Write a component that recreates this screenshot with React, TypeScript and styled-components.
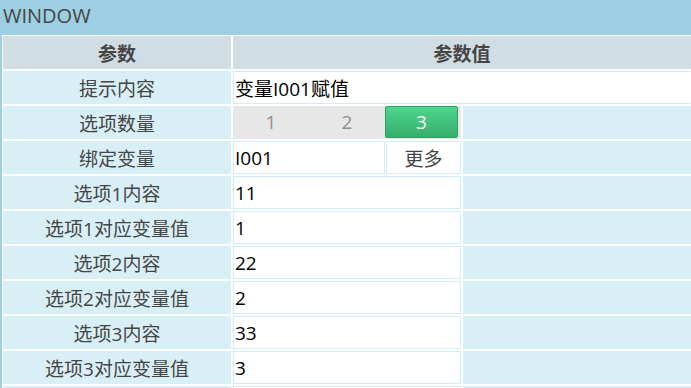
import React, { useState } from 'react';
import styled, { createGlobalStyle } from 'styled-components';

const GlobalStyle = createGlobalStyle`
  html, body {
    margin: 0;
    padding: 0;
    background: #9dcfe2;
    overflow: hidden;
    font-family: 'Open Sans', 'Noto Sans CJK SC', sans-serif;
  }
`;

type Row = { label: string; value: string };

const optionRows: Row[] = [
  { label: '选项1内容', value: '11' },
  { label: '选项1对应变量值', value: '1' },
  { label: '选项2内容', value: '22' },
  { label: '选项2对应变量值', value: '2' },
  { label: '选项3内容', value: '33' },
  { label: '选项3对应变量值', value: '3' },
  { label: '', value: '' },
];

const App: React.FC = () => {
  const [count, setCount] = useState(3);

  return (
    <Window>
      <GlobalStyle />
      <TitleBar>WINDOW</TitleBar>

      <Table>
        <HeadCell>参数</HeadCell>
        <HeadCell $span={2}>参数值</HeadCell>

        <LabelCell>提示内容</LabelCell>
        <ValueBox $span={2} $edge>变量I001赋值</ValueBox>

        <LabelCell>选项数量</LabelCell>
        <Segments>
          {[1, 2, 3].map(n => (
            <SegmentButton key={n} $active={n === count} onClick={() => setCount(n)}>
              {n}
            </SegmentButton>
          ))}
        </Segments>
        <Filler />

        <LabelCell>绑定变量</LabelCell>
        <BindRow>
          <ValueBox>I001</ValueBox>
          <MoreButton>更多</MoreButton>
        </BindRow>
        <Filler />

        {optionRows.map((row, i) => (
          <React.Fragment key={i}>
            <LabelCell>{row.label}</LabelCell>
            <ValueBox>{row.value}</ValueBox>
            <Filler />
          </React.Fragment>
        ))}
      </Table>
    </Window>
  );
};

const Window = styled.div`
  width: 691px;
  height: 388px;
  overflow: hidden;
  background: #9dcfe2;
`;

const TitleBar = styled.div`
  height: 35px;
  padding-left: 3px;
  display: flex;
  align-items: center;
  font-size: 20px;
  color: #454545;
  box-sizing: border-box;
  padding-bottom: 4px;
`;

const Table = styled.div`
  margin-left: 2px;
  padding: 1px 0 1px 1px;
  background: #ffffff;
  display: grid;
  grid-template-columns: 228px 228px 1fr;
  grid-auto-rows: 33px;
  gap: 2px;
`;

const HeadCell = styled.div<{ $span?: number }>`
  grid-column: span ${p => p.$span || 1};
  background: #d0dde2;
  display: flex;
  align-items: center;
  justify-content: center;
  font-size: 19px;
  font-weight: bold;
  color: #454545;
`;

const LabelCell = styled.div`
  background: #d8eff6;
  display: flex;
  align-items: center;
  justify-content: center;
  font-size: 19px;
  color: #454545;
`;

const ValueBox = styled.div<{ $span?: number; $edge?: boolean }>`
  grid-column: span ${p => p.$span || 1};
  background: #ffffff;
  border: 1px solid #d3ecf4;
  border-right-color: ${p => (p.$edge ? '#ffffff' : '#d3ecf4')};
  box-sizing: border-box;
  display: flex;
  align-items: center;
  padding-left: 1px;
  font-size: 19px;
  color: #000;
  min-width: 0;
`;

const Filler = styled.div`
  background: #d8eff6;
`;

const Segments = styled.div`
  background: #e7e7e7;
  display: grid;
  grid-template-columns: 76px 76px 73px;
  padding-bottom: 1px;
`;

const SegmentButton = styled.div<{ $active: boolean }>`
  display: flex;
  align-items: center;
  justify-content: center;
  font-size: 19px;
  cursor: pointer;
  box-sizing: border-box;
  color: ${p => (p.$active ? '#ffffff' : '#8f8f8f')};
  background: ${p => (p.$active ? 'linear-gradient(#4ed68e, #37ae6c)' : 'transparent')};
  border: 1px solid ${p => (p.$active ? '#2f9f61' : 'transparent')};
  border-radius: 2px;
`;

const BindRow = styled.div`
  display: grid;
  grid-template-columns: 152px 1fr;
  gap: 1px;
  background: #ffffff;
`;

const MoreButton = styled.div`
  background: #ffffff;
  border: 1px solid #d3ecf4;
  display: flex;
  align-items: center;
  justify-content: center;
  font-size: 19px;
  color: #454545;
  cursor: pointer;
`;

export default App;
